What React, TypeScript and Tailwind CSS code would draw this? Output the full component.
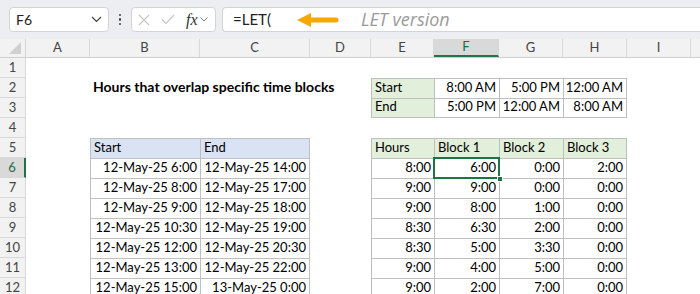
import React from "react";

const font = { fontFamily: "Lato, 'Liberation Sans', sans-serif" };

// column widths A..J
const colW = ["w-[64px]", "w-[110px]", "w-[110px]", "w-[61px]", "w-[63px]", "w-[65px]", "w-[64px]", "w-[64px]", "w-[64px]", "w-[64px]"];
const letters = ["A", "B", "C", "D", "E", "F", "G", "H", "I", ""];

const starts = ["12-May-25 6:00", "12-May-25 8:00", "12-May-25 9:00", "12-May-25 10:30", "12-May-25 12:00", "12-May-25 13:00", "12-May-25 15:00"];
const ends = ["12-May-25 14:00", "12-May-25 17:00", "12-May-25 18:00", "12-May-25 19:00", "12-May-25 20:30", "12-May-25 22:00", "13-May-25 0:00"];
const hours = [
    ["8:00", "6:00", "0:00", "2:00"],
    ["9:00", "9:00", "0:00", "0:00"],
    ["9:00", "8:00", "1:00", "0:00"],
    ["8:30", "6:30", "2:00", "0:00"],
    ["8:30", "5:00", "3:30", "0:00"],
    ["9:00", "4:00", "5:00", "0:00"],
    ["9:00", "2:00", "7:00", "0:00"],
];

type CellInfo = { text?: string; right?: boolean; bg?: string; table?: boolean; lastCol?: boolean; lastRow?: boolean; bold?: boolean; selected?: boolean };

function cellAt(row: number, col: number): CellInfo {
    // col: 0=A ... 9=J
    if (row === 2 && col === 1) return { text: "Hours that overlap specific time blocks", bold: true };
    if (row === 2 || row === 3) {
        const t = row === 2 ? ["Start", "8:00 AM", "5:00 PM", "12:00 AM"] : ["End", "5:00 PM", "12:00 AM", "8:00 AM"];
        if (col >= 4 && col <= 7) {
            return { text: t[col - 4], right: col > 4, bg: col === 4 ? "bg-[#e2efda]" : "", table: true, lastCol: col === 7, lastRow: row === 3 };
        }
    }
    if (row === 5) {
        if (col === 1 || col === 2) return { text: col === 1 ? "Start" : "End", bg: "bg-[#dae3f3]", table: true, lastCol: col === 2 };
        if (col >= 4 && col <= 7) return { text: ["Hours", "Block 1", "Block 2", "Block 3"][col - 4], bg: "bg-[#e2efda]", table: true, lastCol: col === 7 };
    }
    if (row >= 6) {
        const i = row - 6;
        if (col === 1 || col === 2) return { text: col === 1 ? starts[i] : ends[i], right: true, table: true, lastCol: col === 2 };
        if (col >= 4 && col <= 7) return { text: hours[i][col - 4], right: true, table: true, lastCol: col === 7, selected: row === 6 && col === 5 };
    }
    return {};
}

const Cell: React.FC<{ info: CellInfo; w: string }> = ({ info, w }) => {
    const border = info.table
        ? `border-l border-t border-[#bfbfbf] ${info.lastCol ? "border-r" : ""} ${info.lastRow ? "border-b" : ""}`
        : "";
    return (
        <div className={`relative shrink-0 h-full ${w} ${border} ${info.bg ?? ""}`}>
            {info.text && (
                <div className={`absolute inset-0 flex items-end pb-[1px] px-[3px] text-black whitespace-nowrap ${info.right ? "justify-end" : ""} ${info.bold ? "text-[14px] font-bold z-10" : "text-[13px]"}`}>
                    {info.text}
                </div>
            )}
            {info.selected && (
                <>
                    <div className="absolute -left-[2px] -top-[2px] -right-[1px] -bottom-[1px] border-2 border-[#217346] z-20" />
                    <div className="absolute -right-[4px] -bottom-[4px] w-[6px] h-[6px] bg-[#217346] border border-white z-30" />
                </>
            )}
        </div>
    );
};

const App: React.FC = () => {
    const rows = Array.from({ length: 12 }, (_, i) => i + 1);

    return (
        <div className="w-[700px] h-[294px] overflow-hidden bg-white" style={font}>
            {/* Formula bar */}
            <div className="h-[39px] bg-[#eceef1] flex items-start pt-[7px] pl-[9px] gap-0">
                <div className="w-[100px] h-[25px] bg-white border border-[#d4d4d4] rounded-[4px] flex items-center pl-[6px] pr-[6px] justify-between">
                    <span className="text-[14px] text-[#222]">F6</span>
                    <svg width="11" height="7" viewBox="0 0 11 7"><path d="M1 1l4.5 4.5L10 1" fill="none" stroke="#444" strokeWidth="1.2" /></svg>
                </div>
                <div className="w-[22px] h-[25px] flex flex-col items-center justify-center gap-[2px]">
                    <span className="w-[2.5px] h-[2.5px] rounded-full bg-[#444]" />
                    <span className="w-[2.5px] h-[2.5px] rounded-full bg-[#444]" />
                    <span className="w-[2.5px] h-[2.5px] rounded-full bg-[#444]" />
                </div>
                <div className="w-[85px] h-[25px] bg-white border border-[#d4d4d4] rounded-[4px] flex items-center pl-[6px]">
                    <svg width="12" height="12" viewBox="0 0 12 12" className="mr-[11px]"><path d="M1 1l10 10M11 1L1 11" stroke="#c4c4c4" strokeWidth="1.1" /></svg>
                    <svg width="14" height="11" viewBox="0 0 14 11" className="mr-[11px]"><path d="M1 5.5l4 4L13 1" fill="none" stroke="#c4c4c4" strokeWidth="1.1" /></svg>
                    <span className="text-[16px] italic text-[#333] mr-[2px] leading-none" style={{ fontFamily: "'Liberation Serif', serif" }}>fx</span>
                    <svg width="8" height="5" viewBox="0 0 8 5"><path d="M0.5 0.5l3.5 3.5L7.5 0.5" fill="none" stroke="#777" strokeWidth="1" /></svg>
                </div>
                <div className="ml-[6px] flex-1 h-[25px] bg-white border border-r-0 border-[#d4d4d4] rounded-l-[4px] flex items-center pl-[10px]">
                    <span className="text-[15px] text-[#222]">=LET(</span>
                    <svg width="42" height="16" viewBox="0 0 42 16" className="ml-[26px]">
                        <path d="M0 8 L14 1 L14 15 Z" fill="#f6a800" />
                        <path d="M12 8 H39" stroke="#f6a800" strokeWidth="5" strokeLinecap="round" />
                    </svg>
                    <span className="ml-[22px] text-[18px] italic text-[#9a9a9a]" style={{ fontFamily: "'Open Sans', sans-serif" }}>LET version</span>
                </div>
            </div>

            {/* Column headers */}
            <div className="h-[19px] flex bg-[#f2f2f2] border-b border-[#cfcfcf] text-[13px] text-[#444]">
                <div className="w-[26px] shrink-0 border-r border-[#d4d4d4] relative">
                    <svg width="14" height="14" viewBox="0 0 14 14" className="absolute right-[3px] bottom-[2px]"><path d="M13 1V13H1Z" fill="#d0d0d0" /></svg>
                </div>
                {letters.map((l, i) => (
                    <div key={i} className={`${colW[i]} shrink-0 border-r border-[#d8d8d8] flex items-center justify-center ${l === "F" ? "bg-[#d9d9d9] border-b-2 border-b-[#217346] text-[#1e6b40]" : ""}`}>
                        {l}
                    </div>
                ))}
            </div>

            {/* Rows */}
            {rows.map(r => (
                <div key={r} className="h-[20px] flex">
                    <div className={`w-[26px] shrink-0 border-b border-r border-[#d8d8d8] flex items-center justify-center text-[13px] ${r === 6 ? "bg-[#d9d9d9] border-r-2 border-r-[#217346] text-[#1e6b40]" : "bg-[#f2f2f2] text-[#444]"}`}>
                        {r}
                    </div>
                    {letters.map((_, c) => (
                        <Cell key={c} info={cellAt(r, c)} w={colW[c]} />
                    ))}
                </div>
            ))}
        </div>
    );
};

export default App;
